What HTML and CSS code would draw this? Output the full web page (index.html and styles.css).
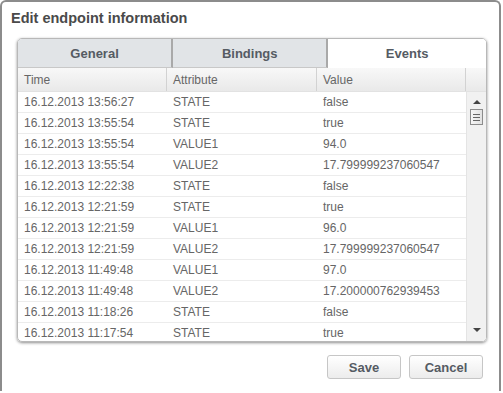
FILE: index.html
```html
<!DOCTYPE html>
<html lang="en">
<head>
    <meta charset="UTF-8">
    <title>Edit endpoint information</title>
    <link rel="stylesheet" href="styles.css">
</head>
<body>
    <div class="dialog">
        <h1 class="dialog-title">Edit endpoint information</h1>

        <!-- Tab panel -->
        <div class="panel">
            <div class="tabs">
                <div class="tab">General</div>
                <div class="tab">Bindings</div>
                <div class="tab active">Events</div>
            </div>
            <div class="grid-head">
                <div class="col">Time</div>
                <div class="col">Attribute</div>
                <div class="col">Value</div>
                <div class="col col-end"></div>
            </div>
            <div class="grid-body">
                <div class="rows">
                    <div class="row"><span>16.12.2013 13:56:27</span><span>STATE</span><span>false</span></div>
                    <div class="row"><span>16.12.2013 13:55:54</span><span>STATE</span><span>true</span></div>
                    <div class="row"><span>16.12.2013 13:55:54</span><span>VALUE1</span><span>94.0</span></div>
                    <div class="row"><span>16.12.2013 13:55:54</span><span>VALUE2</span><span>17.799999237060547</span></div>
                    <div class="row"><span>16.12.2013 12:22:38</span><span>STATE</span><span>false</span></div>
                    <div class="row"><span>16.12.2013 12:21:59</span><span>STATE</span><span>true</span></div>
                    <div class="row"><span>16.12.2013 12:21:59</span><span>VALUE1</span><span>96.0</span></div>
                    <div class="row"><span>16.12.2013 12:21:59</span><span>VALUE2</span><span>17.799999237060547</span></div>
                    <div class="row"><span>16.12.2013 11:49:48</span><span>VALUE1</span><span>97.0</span></div>
                    <div class="row"><span>16.12.2013 11:49:48</span><span>VALUE2</span><span>17.200000762939453</span></div>
                    <div class="row"><span>16.12.2013 11:18:26</span><span>STATE</span><span>false</span></div>
                    <div class="row"><span>16.12.2013 11:17:54</span><span>STATE</span><span>true</span></div>
                </div>
                <!-- fake scrollbar -->
                <div class="scrollbar">
                    <div class="arrow arrow-up"></div>
                    <div class="thumb"><i></i><i></i><i></i></div>
                    <div class="track"></div>
                    <div class="arrow arrow-down"></div>
                </div>
            </div>
        </div>

        <div class="buttons">
            <button class="btn">Save</button>
            <button class="btn">Cancel</button>
        </div>
    </div>
</body>
</html>
```

FILE: styles.css
```css
html, body {
    height: 100%;
}
body {
    margin: 0;
    background: #ffffff;
    font-family: 'Liberation Sans', Arial, sans-serif;
    overflow: hidden;
}
.dialog {
    width: 497px;
    height: 389px;
    border: 2px solid #8c8c8c;
    border-bottom: none;
    border-radius: 6px 6px 0 0;
    background: #ffffff;
}
.dialog-title {
    margin: 0;
    padding: 8px 0 0 9px;
    height: 28px;
    box-sizing: border-box;
    font-size: 14.5px;
    font-weight: bold;
    color: #4a4a4a;
}
.panel {
    margin: 8px 0 0 15px;
    width: 468px;
    border: 1px solid #b8b8b8;
    border-radius: 5px;
    box-shadow: 0 1px 3px rgba(0, 0, 0, 0.45);
    overflow: hidden;
}
.tabs {
    display: flex;
    height: 29px;
}
.tab {
    flex: 1;
    display: flex;
    align-items: center;
    justify-content: center;
    background: #e1e4e7;
    border-right: 2px solid #a9a9a9;
    border-bottom: 1px solid #c8c8c8;
    font-size: 13px;
    font-weight: bold;
    color: #555b63;
}
.tab.active {
    background: #ffffff;
    border-right: none;
    border-bottom-color: #ffffff;
    flex: 1.03;
}
.grid-head {
    display: grid;
    grid-template-columns: 149px 150px 149px 1fr;
    height: 23px;
    background: linear-gradient(#f8f8f8, #e9e9e9);
    border-bottom: 1px solid #e2e2e2;
}
.col {
    display: flex;
    align-items: center;
    padding-left: 6px;
    border-right: 1px solid #d2d2d2;
    font-size: 12px;
    color: #666666;
}
.col-end {
    border-right: none;
}
.grid-body {
    display: flex;
    height: 249px;
    overflow: hidden;
}
.rows {
    flex: 1;
}
.row {
    display: grid;
    grid-template-columns: 149px 150px 149px;
    height: 20px;
    border-bottom: 1px solid #ececec;
}
.row span {
    display: flex;
    align-items: center;
    padding-left: 6px;
    font-size: 12px;
    color: #666666;
}
.scrollbar {
    width: 19px;
    display: flex;
    flex-direction: column;
    align-items: center;
    background: #f1f1f1;
    border-left: 1px solid #e4e4e4;
}
.arrow {
    width: 0;
    height: 0;
    border-left: 4px solid transparent;
    border-right: 4px solid transparent;
}
.arrow-up {
    margin-top: 8px;
    border-bottom: 4px solid #444444;
}
.arrow-down {
    margin-bottom: 9px;
    border-top: 4px solid #444444;
}
.thumb {
    margin-top: 5px;
    width: 11px;
    height: 14px;
    border: 1px solid #8c8c8c;
    background: linear-gradient(90deg, #f6f6f6, #e2e2e2);
    display: flex;
    flex-direction: column;
    justify-content: center;
    gap: 2px;
    align-items: center;
}
.thumb i {
    display: block;
    width: 7px;
    height: 1px;
    background: #666666;
}
.track {
    flex: 1;
}
.buttons {
    display: flex;
    justify-content: flex-end;
    gap: 8px;
    margin: 13px 16px 0 0;
}
.btn {
    width: 74px;
    height: 24px;
    border: 1px solid #c6c6c6;
    border-radius: 3px;
    background: linear-gradient(#ffffff, #ececec);
    font-family: 'Liberation Sans', Arial, sans-serif;
    font-size: 13px;
    font-weight: bold;
    color: #555b63;
}
```
